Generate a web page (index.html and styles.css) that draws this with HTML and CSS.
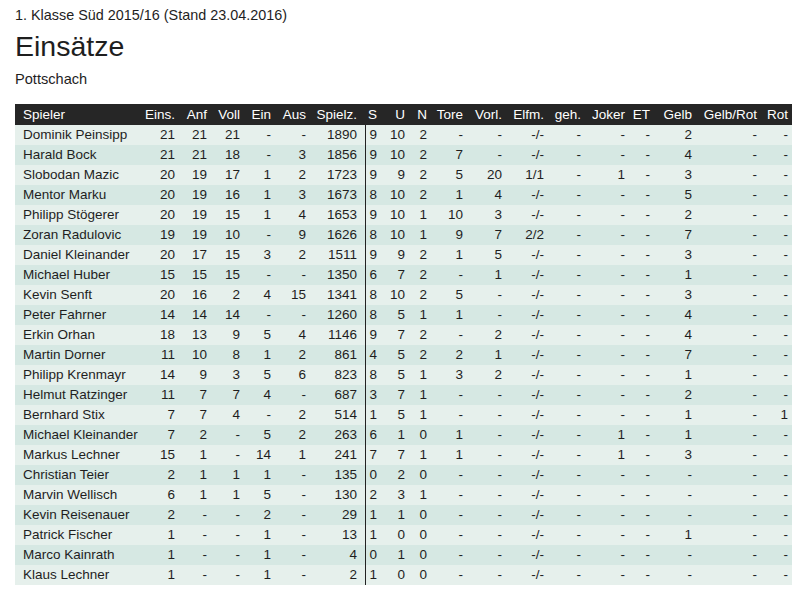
FILE: index.html
```html
<!DOCTYPE html>
<html lang="de">
<head>
<meta charset="utf-8">
<title>Einsätze</title>
<link rel="stylesheet" href="styles.css">
</head>
<body>
<div class="page">
  <div class="league">1. Klasse Süd 2015/16 (Stand 23.04.2016)</div>
  <h1 class="title">Einsätze</h1>
  <div class="team">Pottschach</div>
  <table class="stats">
    <colgroup>
      <col class="c-name"><col class="c-eins"><col class="c-anf"><col class="c-voll"><col class="c-ein"><col class="c-aus"><col class="c-zeit"><col class="c-s"><col class="c-u"><col class="c-n"><col class="c-tore"><col class="c-vorl"><col class="c-elfm"><col class="c-geh"><col class="c-joker"><col class="c-et"><col class="c-gelb"><col class="c-gr"><col class="c-rot">
    </colgroup>
    <thead>
      <tr><th class="name">Spieler</th><th>Eins.</th><th>Anf</th><th>Voll</th><th>Ein</th><th>Aus</th><th class="zeit">Spielz.</th><th>S</th><th>U</th><th>N</th><th>Tore</th><th>Vorl.</th><th>Elfm.</th><th>geh.</th><th>Joker</th><th>ET</th><th>Gelb</th><th>Gelb/Rot</th><th>Rot</th></tr>
    </thead>
    <tbody>
      <tr><td class="name">Dominik Peinsipp</td><td>21</td><td>21</td><td>21</td><td>-</td><td>-</td><td class="zeit">1890</td><td>9</td><td>10</td><td>2</td><td>-</td><td>-</td><td>-/-</td><td>-</td><td>-</td><td>-</td><td>2</td><td>-</td><td>-</td></tr>
      <tr><td class="name">Harald Bock</td><td>21</td><td>21</td><td>18</td><td>-</td><td>3</td><td class="zeit">1856</td><td>9</td><td>10</td><td>2</td><td>7</td><td>-</td><td>-/-</td><td>-</td><td>-</td><td>-</td><td>4</td><td>-</td><td>-</td></tr>
      <tr><td class="name">Slobodan Mazic</td><td>20</td><td>19</td><td>17</td><td>1</td><td>2</td><td class="zeit">1723</td><td>9</td><td>9</td><td>2</td><td>5</td><td>20</td><td>1/1</td><td>-</td><td>1</td><td>-</td><td>3</td><td>-</td><td>-</td></tr>
      <tr><td class="name">Mentor Marku</td><td>20</td><td>19</td><td>16</td><td>1</td><td>3</td><td class="zeit">1673</td><td>8</td><td>10</td><td>2</td><td>1</td><td>4</td><td>-/-</td><td>-</td><td>-</td><td>-</td><td>5</td><td>-</td><td>-</td></tr>
      <tr><td class="name">Philipp Stögerer</td><td>20</td><td>19</td><td>15</td><td>1</td><td>4</td><td class="zeit">1653</td><td>9</td><td>10</td><td>1</td><td>10</td><td>3</td><td>-/-</td><td>-</td><td>-</td><td>-</td><td>2</td><td>-</td><td>-</td></tr>
      <tr><td class="name">Zoran Radulovic</td><td>19</td><td>19</td><td>10</td><td>-</td><td>9</td><td class="zeit">1626</td><td>8</td><td>10</td><td>1</td><td>9</td><td>7</td><td>2/2</td><td>-</td><td>-</td><td>-</td><td>7</td><td>-</td><td>-</td></tr>
      <tr><td class="name">Daniel Kleinander</td><td>20</td><td>17</td><td>15</td><td>3</td><td>2</td><td class="zeit">1511</td><td>9</td><td>9</td><td>2</td><td>1</td><td>5</td><td>-/-</td><td>-</td><td>-</td><td>-</td><td>3</td><td>-</td><td>-</td></tr>
      <tr><td class="name">Michael Huber</td><td>15</td><td>15</td><td>15</td><td>-</td><td>-</td><td class="zeit">1350</td><td>6</td><td>7</td><td>2</td><td>-</td><td>1</td><td>-/-</td><td>-</td><td>-</td><td>-</td><td>1</td><td>-</td><td>-</td></tr>
      <tr><td class="name">Kevin Senft</td><td>20</td><td>16</td><td>2</td><td>4</td><td>15</td><td class="zeit">1341</td><td>8</td><td>10</td><td>2</td><td>5</td><td>-</td><td>-/-</td><td>-</td><td>-</td><td>-</td><td>3</td><td>-</td><td>-</td></tr>
      <tr><td class="name">Peter Fahrner</td><td>14</td><td>14</td><td>14</td><td>-</td><td>-</td><td class="zeit">1260</td><td>8</td><td>5</td><td>1</td><td>1</td><td>-</td><td>-/-</td><td>-</td><td>-</td><td>-</td><td>4</td><td>-</td><td>-</td></tr>
      <tr><td class="name">Erkin Orhan</td><td>18</td><td>13</td><td>9</td><td>5</td><td>4</td><td class="zeit">1146</td><td>9</td><td>7</td><td>2</td><td>-</td><td>2</td><td>-/-</td><td>-</td><td>-</td><td>-</td><td>4</td><td>-</td><td>-</td></tr>
      <tr><td class="name">Martin Dorner</td><td>11</td><td>10</td><td>8</td><td>1</td><td>2</td><td class="zeit">861</td><td>4</td><td>5</td><td>2</td><td>2</td><td>1</td><td>-/-</td><td>-</td><td>-</td><td>-</td><td>7</td><td>-</td><td>-</td></tr>
      <tr><td class="name">Philipp Krenmayr</td><td>14</td><td>9</td><td>3</td><td>5</td><td>6</td><td class="zeit">823</td><td>8</td><td>5</td><td>1</td><td>3</td><td>2</td><td>-/-</td><td>-</td><td>-</td><td>-</td><td>1</td><td>-</td><td>-</td></tr>
      <tr><td class="name">Helmut Ratzinger</td><td>11</td><td>7</td><td>7</td><td>4</td><td>-</td><td class="zeit">687</td><td>3</td><td>7</td><td>1</td><td>-</td><td>-</td><td>-/-</td><td>-</td><td>-</td><td>-</td><td>2</td><td>-</td><td>-</td></tr>
      <tr><td class="name">Bernhard Stix</td><td>7</td><td>7</td><td>4</td><td>-</td><td>2</td><td class="zeit">514</td><td>1</td><td>5</td><td>1</td><td>-</td><td>-</td><td>-/-</td><td>-</td><td>-</td><td>-</td><td>1</td><td>-</td><td>1</td></tr>
      <tr><td class="name">Michael Kleinander</td><td>7</td><td>2</td><td>-</td><td>5</td><td>2</td><td class="zeit">263</td><td>6</td><td>1</td><td>0</td><td>1</td><td>-</td><td>-/-</td><td>-</td><td>1</td><td>-</td><td>1</td><td>-</td><td>-</td></tr>
      <tr><td class="name">Markus Lechner</td><td>15</td><td>1</td><td>-</td><td>14</td><td>1</td><td class="zeit">241</td><td>7</td><td>7</td><td>1</td><td>1</td><td>-</td><td>-/-</td><td>-</td><td>1</td><td>-</td><td>3</td><td>-</td><td>-</td></tr>
      <tr><td class="name">Christian Teier</td><td>2</td><td>1</td><td>1</td><td>1</td><td>-</td><td class="zeit">135</td><td>0</td><td>2</td><td>0</td><td>-</td><td>-</td><td>-/-</td><td>-</td><td>-</td><td>-</td><td>-</td><td>-</td><td>-</td></tr>
      <tr><td class="name">Marvin Wellisch</td><td>6</td><td>1</td><td>1</td><td>5</td><td>-</td><td class="zeit">130</td><td>2</td><td>3</td><td>1</td><td>-</td><td>-</td><td>-/-</td><td>-</td><td>-</td><td>-</td><td>-</td><td>-</td><td>-</td></tr>
      <tr><td class="name">Kevin Reisenauer</td><td>2</td><td>-</td><td>-</td><td>2</td><td>-</td><td class="zeit">29</td><td>1</td><td>1</td><td>0</td><td>-</td><td>-</td><td>-/-</td><td>-</td><td>-</td><td>-</td><td>-</td><td>-</td><td>-</td></tr>
      <tr><td class="name">Patrick Fischer</td><td>1</td><td>-</td><td>-</td><td>1</td><td>-</td><td class="zeit">13</td><td>1</td><td>0</td><td>0</td><td>-</td><td>-</td><td>-/-</td><td>-</td><td>-</td><td>-</td><td>1</td><td>-</td><td>-</td></tr>
      <tr><td class="name">Marco Kainrath</td><td>1</td><td>-</td><td>-</td><td>1</td><td>-</td><td class="zeit">4</td><td>0</td><td>1</td><td>0</td><td>-</td><td>-</td><td>-/-</td><td>-</td><td>-</td><td>-</td><td>-</td><td>-</td><td>-</td></tr>
      <tr><td class="name">Klaus Lechner</td><td>1</td><td>-</td><td>-</td><td>1</td><td>-</td><td class="zeit">2</td><td>1</td><td>0</td><td>0</td><td>-</td><td>-</td><td>-/-</td><td>-</td><td>-</td><td>-</td><td>-</td><td>-</td><td>-</td></tr>
    </tbody>
  </table>
</div>
</body>
</html>
```
FILE: styles.css
```css
html, body {
  margin: 0;
  padding: 0;
  background: #ffffff;
}
body {
  font-family: "Liberation Sans", Arial, sans-serif;
  color: #1e1e1e;
}
.page {
  padding: 7px 15px 0 15px;
  display: flex;
  flex-direction: column;
  align-items: flex-start;
}
.league {
  font-size: 14.4px;
  line-height: 16px;
}
.title {
  margin: 7px 0 0 0;
  font-size: 28.5px;
  font-weight: normal;
  line-height: 32px;
}
.team {
  margin-top: 9px;
  font-size: 14.6px;
  line-height: 16px;
}
.stats {
  margin-top: 17px;
  width: 777px;
  table-layout: fixed;
  border-collapse: separate;
  border-spacing: 0;
  font-size: 13.5px;
}
.stats th,
.stats td {
  padding: 0 4px 0 0;
  text-align: right;
  white-space: nowrap;
  overflow: hidden;
  font-weight: normal;
}
.stats th {
  background: #262626;
  color: #ffffff;
  height: 21px;
  line-height: 21px;
}
.stats td {
  height: 20px;
  line-height: 20px;
  color: #1e1e1e;
}
.stats .name {
  text-align: left;
  padding-left: 8px;
}
.stats .zeit {
  padding-right: 8px;
}
.stats td.zeit {
  border-right: 1px solid #222222;
}
.stats th.zeit {
  border-right: 1px solid #262626;
}
.stats tbody tr:nth-child(odd) td { background: #e6f0ec; }
.stats tbody tr:nth-child(even) td { background: #d6e8e3; }

.c-name { width: 126px; }
.c-eins { width: 38px; }
.c-anf { width: 32px; }
.c-voll { width: 33px; }
.c-ein { width: 31px; }
.c-aus { width: 35px; }
.c-zeit { width: 56px; }
.c-s { width: 15px; }
.c-u { width: 28px; }
.c-n { width: 22px; }
.c-tore { width: 36px; }
.c-vorl { width: 39px; }
.c-elfm { width: 42px; }
.c-geh { width: 37px; }
.c-joker { width: 44px; }
.c-et { width: 25px; }
.c-gelb { width: 42px; }
.c-gr { width: 65px; }
.c-rot { width: 31px; }
```
